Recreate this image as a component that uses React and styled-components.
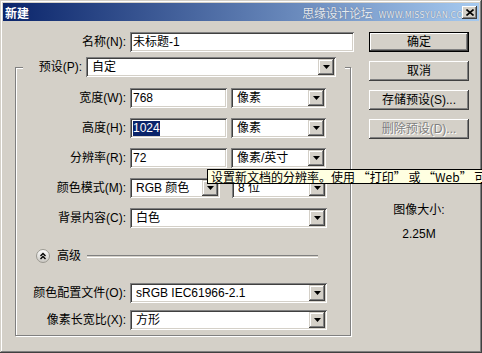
import React from "react";
import styled, { createGlobalStyle } from "styled-components";

const Global = createGlobalStyle`
  html, body { margin: 0; padding: 0; background: #d4d0c8; overflow: hidden; }
  body {
    font-family: "Liberation Sans", "Noto Sans CJK SC", sans-serif;
    font-size: 12px;
    color: #000;
  }
`;

const Window = styled.div`
  position: relative;
  width: 482px;
  height: 353px;
  box-sizing: border-box;
  padding: 3px;
  overflow: hidden;
  background: #d4d0c8;
  box-shadow: inset -1px -1px 0 #404040, inset 1px 1px 0 #d4d0c8,
    inset -2px -2px 0 #808080, inset 2px 2px 0 #fff;
  display: flex;
  flex-direction: column;
`;

const TitleBar = styled.div`
  height: 18px;
  display: flex;
  align-items: center;
  background: linear-gradient(to right, #0a246a, #a6caf0);
`;

const Title = styled.span`
  flex: 1;
  padding-left: 2px;
  color: #fff;
  font-weight: bold;
  font-size: 12px;
  font-family: "Noto Sans CJK SC", sans-serif;
`;

const Watermark = styled.div`
  position: absolute;
  top: 4px;
  right: 12px;
  display: flex;
  align-items: baseline;
  gap: 6px;
  color: #e4eaf2;
  text-shadow: 0 0 1px #50607a;
  white-space: nowrap;
`;

const WmCn = styled.span`
  font-family: "Noto Sans CJK SC", sans-serif;
  font-size: 12px;
  letter-spacing: -0.3px;
`;

const WmEn = styled.span`
  font-family: "DejaVu Sans", sans-serif;
  font-size: 8px;
  letter-spacing: 0.2px;
`;

const CloseBtn = styled.div`
  width: 15px;
  height: 13px;
  margin-right: 2px;
  background: #d4d0c8;
  box-shadow: inset -1px -1px 0 #404040, inset 1px 1px 0 #fff,
    inset -2px -2px 0 #808080;
  display: flex;
  align-items: center;
  justify-content: center;
  position: relative;
  z-index: 1;
`;

const Body = styled.div`
  display: flex;
  gap: 13px;
  padding-top: 11px;
`;

const LeftCol = styled.div`
  width: 353px;
  display: flex;
  flex-direction: column;
`;

const Row = styled.div`
  display: flex;
  align-items: center;
  gap: 4px;
  height: 20px;
  margin-top: ${(p) => p.$mt || 0}px;
  position: relative;
`;

const Label = styled.span`
  width: ${(p) => p.$w}px;
  text-align: right;
  white-space: nowrap;
  line-height: 20px;
`;

const Field = styled.div`
  width: ${(p) => p.$w}px;
  height: 20px;
  box-sizing: border-box;
  padding: 2px;
  background: #fff;
  box-shadow: inset 1px 1px 0 #808080, inset -1px -1px 0 #fff,
    inset 2px 2px 0 #404040, inset -2px -2px 0 #d4d0c8;
  display: flex;
  align-items: center;
`;

const FieldText = styled.span`
  flex: 1;
  padding-left: ${(p) => (p.$pad === undefined ? 1 : p.$pad)}px;
  line-height: 16px;
  white-space: nowrap;
  overflow: hidden;
`;

const Selected = styled.span`
  background: #0a246a;
  color: #fff;
  display: inline-block;
  line-height: 15px;
`;

const ArrowBtn = styled.div`
  width: 16px;
  height: 16px;
  flex: none;
  background: #d4d0c8;
  box-shadow: inset -1px -1px 0 #404040, inset 1px 1px 0 #d4d0c8,
    inset -2px -2px 0 #808080, inset 2px 2px 0 #fff;
  display: flex;
  align-items: center;
  justify-content: center;
`;

const Group = styled.fieldset`
  margin: 5px 0 0 12px;
  width: 336px;
  box-sizing: border-box;
  min-width: 0;
  padding: 0 0 5px 0;
  border: 1px solid #808080;
  box-shadow: inset 1px 1px 0 #fff, 1px 1px 0 #fff;
`;

const Legend = styled.legend`
  margin-left: 7px;
  padding: 0 9px 0 0;
  background: #d4d0c8;
`;

const LegendRow = styled.div`
  display: flex;
  align-items: center;
  gap: 4px;
  height: 20px;
`;

const Advanced = styled.div`
  display: flex;
  align-items: center;
  height: 16px;
  margin-top: 20px;
  padding-left: 20px;
`;

const AdvText = styled.span`
  margin: 0 6px 0 7px;
  line-height: 16px;
`;

const Rule = styled.div`
  width: 231px;
  height: 1px;
  border-top: 1px solid #808080;
  border-bottom: 1px solid #fff;
`;

const Tooltip = styled.div`
  position: absolute;
  left: 191px;
  top: 21px;
  z-index: 2;
  height: 15px;
  box-sizing: border-box;
  padding: 0 3px;
  background: #ffffe1;
  border: 1px solid #000;
  font-family: "Noto Sans CJK SC", sans-serif;
  line-height: 13px;
  white-space: nowrap;
`;

const RightCol = styled.div`
  width: 100px;
  display: flex;
  flex-direction: column;
  gap: 9px;
`;

const Button = styled.div`
  height: 20px;
  background: #d4d0c8;
  box-shadow: ${(p) =>
    p.$default
      ? "inset 0 0 0 1px #000, inset -2px -2px 0 #404040, inset 2px 2px 0 #fff, inset -3px -3px 0 #808080"
      : "inset -1px -1px 0 #404040, inset 1px 1px 0 #fff, inset -2px -2px 0 #808080"};
  color: ${(p) => (p.$disabled ? "#808080" : "#000")};
  text-shadow: ${(p) => (p.$disabled ? "1px 1px 0 #fff" : "none")};
  text-align: center;
  line-height: 20px;
  white-space: nowrap;
`;

const SizeInfo = styled.div`
  margin-top: 55px;
  display: flex;
  flex-direction: column;
  align-items: center;
  gap: 10px;
  line-height: 14px;
`;

const Arrow = () => (
  <svg width="7" height="4" viewBox="0 0 7 4">
    <path d="M0 0h7L3.5 4z" fill="#000" />
  </svg>
);

const Select = ({ w, children }) => (
  <Field $w={w}>
    <FieldText $pad={4}>{children}</FieldText>
    <ArrowBtn>
      <Arrow />
    </ArrowBtn>
  </Field>
);

const AdvIcon = () => (
  <svg width="14" height="14" viewBox="0 0 14 14">
    <defs>
      <linearGradient id="adv" x1="0" y1="0" x2="0" y2="1">
        <stop offset="0" stopColor="#ffffff" />
        <stop offset="1" stopColor="#c8c6c0" />
      </linearGradient>
    </defs>
    <circle cx="7" cy="7" r="6.5" fill="url(#adv)" stroke="#9a9890" />
    <path d="M4.5 7 7 4.5 9.5 7M4.5 10 7 7.5 9.5 10" fill="none" stroke="#000" strokeWidth="1.4" />
  </svg>
);

export default function App() {
  return (
    <>
      <Global />
      <Window>
        <TitleBar>
          <Title>新建</Title>
          <CloseBtn>
            <svg width="8" height="7" viewBox="0 0 8 7">
              <path d="M0.5 0.5 7.5 6.5M7.5 0.5 0.5 6.5" stroke="#000" strokeWidth="1.6" />
            </svg>
          </CloseBtn>
        </TitleBar>
        <Watermark>
          <WmCn>思缘设计论坛</WmCn>
          <WmEn>WWW.MISSYUAN.COM</WmEn>
        </Watermark>
        <Body>
          <LeftCol>
            <Row>
              <Label $w={123}>名称(N):</Label>
              <Field $w={224}>
                <FieldText>未标题-1</FieldText>
              </Field>
            </Row>
            <Group>
              <Legend>
                <LegendRow>
                  <Label $w={59}>预设(P):</Label>
                  <Select w={250}>自定</Select>
                </LegendRow>
              </Legend>
              <Row $mt={11}>
                <Label $w={110}>宽度(W):</Label>
                <Field $w={97}>
                  <FieldText>768</FieldText>
                </Field>
                <Select w={95}>像素</Select>
              </Row>
              <Row $mt={10}>
                <Label $w={110}>高度(H):</Label>
                <Field $w={97}>
                  <FieldText>
                    <Selected>1024</Selected>
                  </FieldText>
                </Field>
                <Select w={95}>像素</Select>
              </Row>
              <Row $mt={10}>
                <Label $w={110}>分辨率(R):</Label>
                <Field $w={97}>
                  <FieldText>72</FieldText>
                </Field>
                <Select w={95}>像素/英寸</Select>
                <Tooltip>设置新文档的分辨率。使用 “打印” 或 “Web” 可使用预设值。</Tooltip>
              </Row>
              <Row $mt={10}>
                <Label $w={110}>颜色模式(M):</Label>
                <Select w={90}>RGB 颜色</Select>
                <span style={{ width: 4 }} />
                <Select w={95}>8 位</Select>
              </Row>
              <Row $mt={10}>
                <Label $w={110}>背景内容(C):</Label>
                <Select w={197}>白色</Select>
              </Row>
              <Advanced>
                <AdvIcon />
                <AdvText>高级</AdvText>
                <Rule />
              </Advanced>
              <Row $mt={19}>
                <Label $w={110}>颜色配置文件(O):</Label>
                <Select w={197}>sRGB IEC61966-2.1</Select>
              </Row>
              <Row $mt={7}>
                <Label $w={110}>像素长宽比(X):</Label>
                <Select w={197}>方形</Select>
              </Row>
            </Group>
          </LeftCol>
          <RightCol>
            <Button $default>确定</Button>
            <Button>取消</Button>
            <Button>存储预设(S)...</Button>
            <Button $disabled>删除预设(D)...</Button>
            <SizeInfo>
              <span>图像大小:</span>
              <span>2.25M</span>
            </SizeInfo>
          </RightCol>
        </Body>
      </Window>
    </>
  );
}
